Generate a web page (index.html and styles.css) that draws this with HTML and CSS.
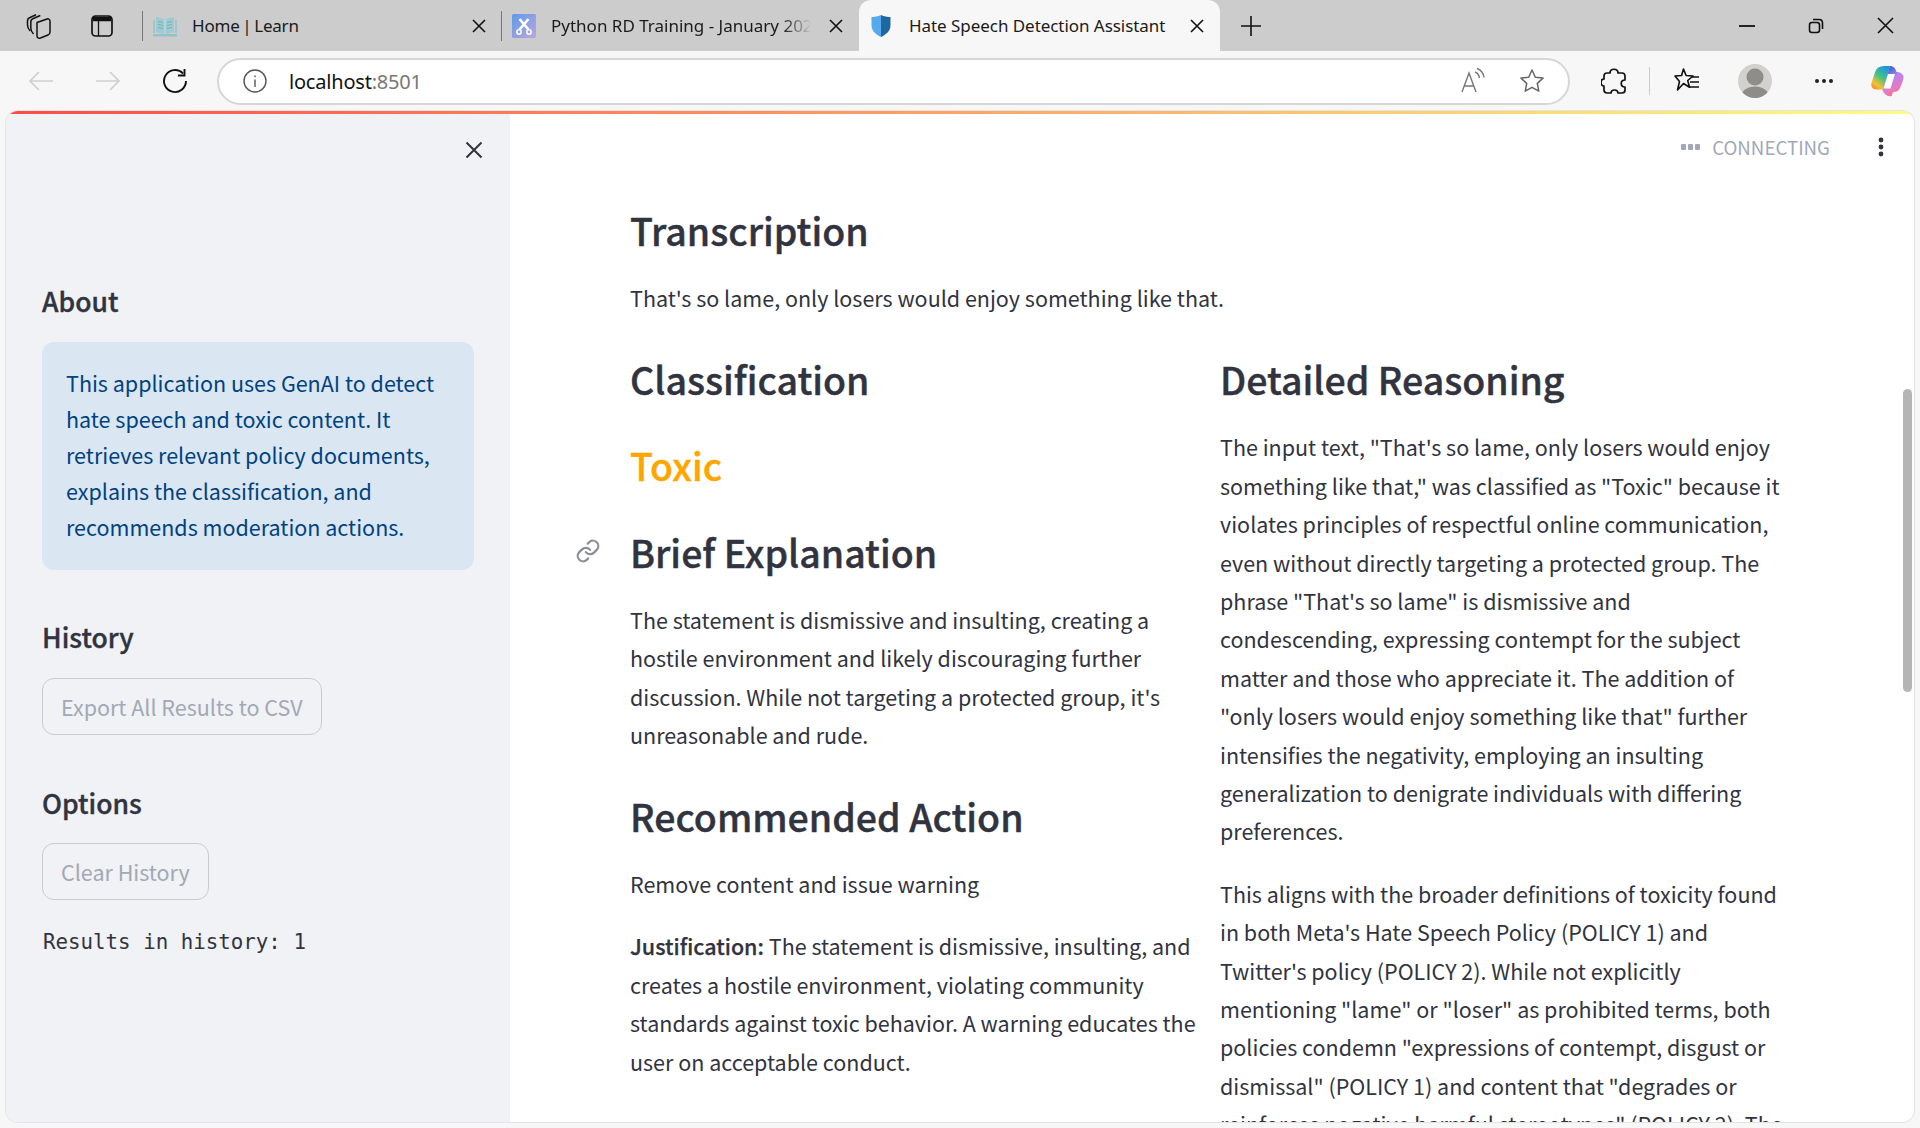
FILE: index.html
```html
<!DOCTYPE html>
<html lang="en">
<head>
<meta charset="utf-8">
<title>Hate Speech Detection Assistant</title>
<link rel="stylesheet" href="styles.css">
</head>
<body>
<header class="tabbar">
  <div class="tb-lead">
    <svg class="ico" width="26" height="26" viewBox="0 0 26 26" fill="none" stroke="#111" stroke-width="1.500" stroke-linejoin="round"><path d="M11 9.500l10-3.500c1.500-.5 3 .5 3 2v11c0 1.500-.7 2.500-2 3l-7.500 3c-2 .7-3.500-.3-3.500-2z"/><path d="M7.500 21C5.500 19 4.800 17 4.800 15V9c0-2 1-3 2.500-3.500l7-3"/><path d="M4.200 18C2.200 16 1.500 14 1.500 12V8c0-1.800 1-3 2.500-3.500L10 1.800"/></svg>
    <svg class="ico" width="26" height="26" viewBox="0 0 26 26" fill="none" stroke="#111" stroke-width="1.700"><rect x="3" y="3" width="20" height="20" rx="3.500"/><path d="M4 6h18" stroke-width="4.500"/><path d="M9.500 8v15" stroke-width="1.300"/></svg>
  </div>
  <div class="tab tab-a">
    <svg class="fav" width="24" height="24" viewBox="0 0 24 24"><path d="M3 3l9 2 9-2v15l-9 2-9-2z" fill="#9fcbd0"/><path d="M12 5v15" stroke="#c6dfe2" stroke-width="1"/><path d="M5 7.500l5 1M5 10.500l5 1M5 13.500l5 1M14 8.500l5-1M14 11.500l5-1M14 14.500l5-1" stroke="#74b2bb" stroke-width="1.200"/><path d="M0 20h24v2.500H0z" fill="#92c3ca"/><path d="M1 6v13M23 6v13" stroke="#92c3ca" stroke-width="1.500"/></svg>
    <span class="tab-title tab-home">Home | Learn</span>
    <svg class="tab-x" width="16" height="16" viewBox="0 0 16 16" stroke="#111" stroke-width="1.600"><path d="M2 2l12 12M14 2L2 14"/></svg>
  </div>
  <div class="tab tab-b">
    <svg class="fav" width="24" height="24" viewBox="0 0 24 24"><defs><linearGradient id="fb" x1="0" y1="0" x2="1" y2="1"><stop offset="0" stop-color="#5e9bea"/><stop offset="1" stop-color="#bca6dc"/></linearGradient></defs><rect width="24" height="24" rx="1.500" fill="url(#fb)"/><path d="M7.500 5l9 10.500M16.500 5l-9 10.500" stroke="#fff" stroke-width="2.600"/><circle cx="7" cy="18" r="2.200" fill="none" stroke="#fff" stroke-width="1.500"/><circle cx="17" cy="18" r="2.200" fill="none" stroke="#fff" stroke-width="1.500"/></svg>
    <span class="tab-title tab-fade">Python RD Training - January 2025</span>
    <svg class="tab-x" width="16" height="16" viewBox="0 0 16 16" stroke="#111" stroke-width="1.600"><path d="M2 2l12 12M14 2L2 14"/></svg>
  </div>
  <div class="tab tab-active">
    <svg class="fav" width="22" height="24" viewBox="0 0 22 24"><path d="M11 1C8 2.500 4.500 3 1.500 3v8.500c0 5 4 9 9.500 11.500z" fill="#55a9ec"/><path d="M11 1c3 1.500 6.500 2 9.500 2v8.500c0 5-4 9-9.500 11.500z" fill="#20669f"/></svg>
    <span class="tab-title">Hate Speech Detection Assistant</span>
    <svg class="tab-x" width="16" height="16" viewBox="0 0 16 16" stroke="#111" stroke-width="1.600"><path d="M2 2l12 12M14 2L2 14"/></svg>
  </div>
  <svg class="newtab" width="22" height="22" viewBox="0 0 22 22" stroke="#111" stroke-width="1.600"><path d="M11 1v20M1 11h20"/></svg>
  <div class="winctl">
    <svg width="16" height="16" viewBox="0 0 16 16" stroke="#111" stroke-width="1.800"><path d="M0 8h16"/></svg>
    <svg width="16" height="16" viewBox="0 0 16 16" fill="none" stroke="#111" stroke-width="1.600"><rect x="1.500" y="4.500" width="10" height="10" rx="2.500"/><path d="M5 1.500h6c2 0 3.500 1.500 3.500 3.500v6"/></svg>
    <svg width="17" height="17" viewBox="0 0 17 17" stroke="#111" stroke-width="1.600"><path d="M1 1l15 15M16 1L1 16"/></svg>
  </div>
</header>

<nav class="toolbar">
  <svg class="nav-ico" width="26" height="24" viewBox="0 0 26 24" fill="none" stroke="#cfcfcf" stroke-width="1.700"><path d="M25 12H2M11 3l-9 9 9 9"/></svg>
  <svg class="nav-ico" width="26" height="24" viewBox="0 0 26 24" fill="none" stroke="#cfcfcf" stroke-width="1.700"><path d="M1 12h23M15 3l9 9-9 9"/></svg>
  <svg class="nav-ico" width="26" height="26" viewBox="0 0 26 26" fill="none" stroke="#111" stroke-width="1.900"><path d="M21 5.500A11 11 0 1 0 24 13"/><path d="M22.500 1v6.500H16"/></svg>
  <div class="addr">
    <svg width="24" height="24" viewBox="0 0 24 24" fill="none" stroke="#555" stroke-width="1.400"><circle cx="12" cy="12" r="11"/><path d="M12 10.500V18M12 6.500v1.800"/></svg>
    <span class="url">localhost<span class="url-port">:8501</span></span>
    <svg class="read" width="26" height="28" viewBox="0 0 26 28" fill="none" stroke="#777" stroke-width="1.400"><path d="M2 25l7-19 7 19M4.500 19h9"/><path d="M15 5c2.500 1 4 3 4.500 6M17 1.500c4 1.500 6.500 4.500 7 9"/></svg>
    <svg class="star" width="26" height="26" viewBox="0 0 26 26" fill="none" stroke="#666" stroke-width="1.500"><path d="M13 2l3.300 7.200 7.700.9-5.700 5.300 1.500 7.700L13 19.300 6.200 23.100l1.500-7.700L2 10.100l7.700-.9z" stroke-linejoin="round"/></svg>
  </div>
  <svg class="t-ext" width="26" height="28" viewBox="0 0 26 28" fill="none" stroke="#111" stroke-width="1.700"><path d="M9 6c0-5 8-5 8 0h4c2 0 3 1 3 3v4c-5 0-5 7 0 7v3c0 2-1 3-3 3h-4c0-4-7-4-7 0H6c-2 0-3-1-3-3v-4c-4 0-4-7 0-7V9c0-2 1-3 3-3z" stroke-linejoin="round"/></svg>
  <span class="t-sep"></span>
  <svg class="t-fav" width="26" height="28" viewBox="0 0 26 28" fill="none" stroke="#111" stroke-width="1.600"><path d="M9.500 2l2.600 6.500 7 .5-5.400 4.500 1.800 6.800-6-3.800-6 6.500 2-8.500L1 9l6.600-.5z" stroke-linejoin="round"/><path d="M17 10h8M16 15h9M15 20h10"/></svg>
  <span class="avatar"><svg width="34" height="34" viewBox="0 0 34 34"><circle cx="17" cy="13" r="8.500" fill="#8f8d8a"/><ellipse cx="17" cy="33" rx="14" ry="10.500" fill="#8f8d8a"/></svg></span>
  <svg class="t-more" width="20" height="6" viewBox="0 0 20 6" fill="#222"><circle cx="3" cy="3" r="2"/><circle cx="10" cy="3" r="2"/><circle cx="17" cy="3" r="2"/></svg>
  <svg class="t-cop" width="34" height="33" viewBox="0 0 34 33"><defs><linearGradient id="c1" x1="0.800" y1="0" x2="0.200" y2="1"><stop offset="0" stop-color="#1f8fe6"/><stop offset=".45" stop-color="#3cc28a"/><stop offset=".8" stop-color="#f3c22c"/><stop offset="1" stop-color="#f58a3c"/></linearGradient><linearGradient id="c2" x1="0.300" y1="0" x2="0.700" y2="1"><stop offset="0" stop-color="#1a5fd0"/><stop offset=".4" stop-color="#b884ee"/><stop offset=".75" stop-color="#e97ac0"/><stop offset="1" stop-color="#ff6a3c"/></linearGradient></defs><path d="M14 1c-4.500 0-7.500 2-9 6L1.500 18c-1 3.500 1 6.500 5 6.500H13l7-23.500z" fill="url(#c1)"/><path d="M20 1c3.500 0 5.500 2 6.500 6 4 .5 7.500 2 7 6-.5 3-2 6.500-3.500 10-1.500 3-4 4-7 4l-1.500 4c-4 1-8-2-9-6.500z" fill="url(#c2)"/><path d="M18 9h7l-4.500 14.500h-7z" fill="#fff"/></svg>
</nav>

<div class="app">
  <div class="deco"></div>
  <div class="app-body">
    <aside class="sidebar">
      <div class="side-close"><svg width="18" height="18" viewBox="0 0 18 18" stroke="#31333f" stroke-width="2"><path d="M1.500 1.500l15 15M16.500 1.500l-15 15"/></svg></div>
      <h3 class="side-h side-about">About</h3>
      <div class="info">This application uses GenAI to detect hate speech and toxic content. It retrieves relevant policy documents, explains the classification, and recommends moderation actions.</div>
      <h3 class="side-h side-hist">History</h3>
      <button class="btn" disabled>Export All Results to CSV</button>
      <h3 class="side-h side-opt">Options</h3>
      <button class="btn" disabled>Clear History</button>
      <p class="mono">Results in history: 1</p>
    </aside>
    <main class="main">
      <div class="status">
        <svg width="20" height="6" viewBox="0 0 20 6" fill="#a3a8b8"><rect width="5" height="6" rx="1"/><rect x="7" width="5" height="6" rx="1"/><rect x="14" width="5" height="6" rx="1"/></svg>
        <span class="status-t">CONNECTING</span>
        <svg class="kebab" width="6" height="20" viewBox="0 0 6 20" fill="#31333f"><circle cx="3" cy="3" r="2.400"/><circle cx="3" cy="10" r="2.400"/><circle cx="3" cy="17" r="2.400"/></svg>
      </div>
      <div class="content">
        <h2 class="h">Transcription</h2>
        <p class="p">That's so lame, only losers would enjoy something like that.</p>
        <div class="cols">
          <section class="col">
            <h2 class="h">Classification</h2>
            <h2 class="h h-toxic">Toxic</h2>
            <h2 class="h h-link"><svg class="link" width="26" height="26" viewBox="0 0 24 24" fill="none" stroke="#8b8e99" stroke-width="2" stroke-linecap="round" stroke-linejoin="round"><path d="M10 13a5 5 0 0 0 7.500.5l3-3a5 5 0 0 0-7-7l-1.700 1.700"/><path d="M14 11a5 5 0 0 0-7.500-.5l-3 3a5 5 0 0 0 7 7l1.700-1.700"/></svg>Brief Explanation</h2>
            <p class="p">The statement is dismissive and insulting, creating a hostile environment and likely discouraging further discussion. While not targeting a protected group, it's unreasonable and rude.</p>
            <h2 class="h">Recommended Action</h2>
            <p class="p">Remove content and issue warning</p>
            <p class="p"><strong>Justification:</strong> The statement is dismissive, insulting, and creates a hostile environment, violating community standards against toxic behavior. A warning educates the user on acceptable conduct.</p>
          </section>
          <section class="col">
            <h2 class="h h-detail">Detailed Reasoning</h2>
            <p class="p">The input text, "That's so lame, only losers would enjoy something like that," was classified as "Toxic" because it violates principles of respectful online communication, even without directly targeting a protected group. The phrase "That's so lame" is dismissive and condescending, expressing contempt for the subject matter and those who appreciate it. The addition of "only losers would enjoy something like that" further intensifies the negativity, employing an insulting generalization to denigrate individuals with differing preferences.</p>
            <p class="p">This aligns with the broader definitions of toxicity found in both Meta's Hate Speech Policy (POLICY 1) and Twitter's policy (POLICY 2). While not explicitly mentioning "lame" or "loser" as prohibited terms, both policies condemn "expressions of contempt, disgust or dismissal" (POLICY 1) and content that "degrades or reinforces negative harmful stereotypes" (POLICY 2). The</p>
          </section>
        </div>
      </div>
      <div class="thumb"></div>
    </main>
  </div>
</div>
</body>
</html>
```

FILE: styles.css
```css
* { box-sizing: border-box; }
html, body { margin: 0; height: 100%; overflow: hidden; }
body { width: 1920px; height: 1128px; background: #f7f7f7; font-family: "Noto Sans", "Open Sans", sans-serif; display: flex; flex-direction: column; }

.tabbar { height: 51px; background: #ccc; display: flex; align-items: center; flex: none; }
.tb-lead { width: 143px; height: 51px; padding-left: 26px; display: flex; align-items: center; gap: 37px; position: relative; }
.tb-lead::after { content: ""; position: absolute; right: 0; top: 11px; height: 30px; width: 1px; background: #777; }
.tab { height: 51px; display: flex; align-items: center; position: relative; flex: none; }
.tab-a { width: 359px; padding-left: 10px; }
.tab-a::after { content: ""; position: absolute; right: 0; top: 11px; height: 30px; width: 1px; background: #777; }
.tab-b { width: 357px; padding-left: 10px; }
.tab-active { width: 361px; background: #f7f7f7; border-radius: 12px 12px 0 0; padding-left: 11px; }
.fav { flex: none; }
.tab-title { font-size: 17px; color: #1a1a1a; margin-left: 15px; white-space: nowrap; flex: 1; overflow: hidden; }
.tab-home { word-spacing: -1.500px; letter-spacing: -0.200px; }
.tab-active .tab-title { margin-left: 17px; letter-spacing: -0.050px; }
.tab-fade { -webkit-mask-image: linear-gradient(90deg, #000 88%, transparent 99%); mask-image: linear-gradient(90deg, #000 88%, transparent 99%); }
.tab-x { flex: none; margin: 0 15px 0 14px; }
.newtab { margin-left: 20px; flex: none; }
.winctl { margin-left: auto; display: flex; align-items: center; gap: 53px; padding-right: 26px; }

.toolbar { height: 60px; flex: none; display: flex; align-items: center; padding-left: 28px; background: #f7f7f7; }
.nav-ico { flex: none; margin-right: 41px; }
.nav-ico:nth-child(3) { margin-right: 29px; }
.addr { width: 1353px; height: 47px; background: #fff; border: 2px solid #d6d6d6; border-radius: 24px; display: flex; align-items: center; padding-left: 24px; flex: none; }
.url { font-size: 20px; color: #111; margin-left: 22px; flex: 1; letter-spacing: -0.200px; }
.url-port { color: #777; }
.read { margin-right: 33px; }
.star { margin-right: 23px; }
.t-ext { margin-left: 31px; flex: none; }
.t-sep { width: 1px; height: 28px; background: #ccc; margin: 0 24px 0 22px; flex: none; }
.t-fav { flex: none; }
.avatar { width: 34px; height: 34px; border-radius: 50%; background: #d2d1cd; margin-left: 38px; overflow: hidden; flex: none; display: block; }
.avatar svg { display: block; }
.t-more { margin-left: 42px; flex: none; }
.t-cop { margin-left: 36px; flex: none; }

.app { flex: none; height: 1011px; margin: 0 6px 0 6px; background: #fff; border-radius: 12px; overflow: hidden; display: flex; flex-direction: column; box-shadow: 0 0 0 1px #e4e4e4; }
.deco { height: 3px; flex: none; background: linear-gradient(90deg, #ff4b4b, #fffd80); }
.app-body { flex: 1; display: flex; min-height: 0; font-family: "Noto Sans CJK SC", "Source Sans Pro", sans-serif; color: #31333f; }

.sidebar { width: 504px; flex: none; background: #f0f2f6; padding: 0 37px 0 36px; display: flex; flex-direction: column; align-items: flex-start; }
.side-close { align-self: stretch; display: flex; justify-content: flex-end; padding-top: 27px; margin-right: -10px; height: 169px; }
.side-h { margin: 0; font-size: 26.500px; line-height: 36px; font-weight: 500; -webkit-text-stroke: 0.350px currentColor; }
.side-about { margin-bottom: 23px; }
.info { width: 432px; height: 228px; background: #dbe6f3; color: #004280; border-radius: 12px; padding: 23px 24px; font-size: 21.500px; line-height: 36px; }
.side-hist { margin-top: 49px; margin-bottom: 23px; }
.btn { font-family: inherit; font-size: 21.500px; line-height: 32px; height: 57px; color: #a3a8b4; background: transparent; border: 1.500px solid #c9cbd1; border-radius: 12px; padding: 0 18px; }
.side-opt { margin-top: 50px; margin-bottom: 22px; }
.mono { font-family: "DejaVu Sans Mono", "Liberation Mono", monospace; font-size: 20.800px; line-height: 30px; margin: 27px 0 0 1px; }

.main { flex: 1; position: relative; overflow: hidden; }
.status { position: absolute; right: 30px; top: 19px; display: flex; align-items: center; color: #a3a8b8; }
.status-t { font-size: 18.700px; line-height: 28px; margin-left: 11px; }
.kebab { margin-left: 48px; }
.content { padding: 78px 0 0 120px; width: 1276px; }
.h { margin: 0 0 24px; padding-top: 12.600px; font-size: 37.500px; line-height: 50px; font-weight: 500; position: relative; white-space: nowrap; -webkit-text-stroke: 0.400px currentColor; }
.h-detail { margin-bottom: 24.800px; }
.h-toxic { color: #ffa500; }
.link { position: absolute; left: -55px; top: 24px; }
.p { margin: 0 0 24px; font-size: 21.500px; line-height: 38.400px; }
.p strong { font-weight: 500; -webkit-text-stroke: 0.250px currentColor; }
.cols { display: flex; gap: 24px; }
.col { width: 566px; flex: none; }
.thumb { position: absolute; left: 1393px; top: 275px; width: 9px; height: 303px; border-radius: 5px; background: #b5b5b5; }
```
